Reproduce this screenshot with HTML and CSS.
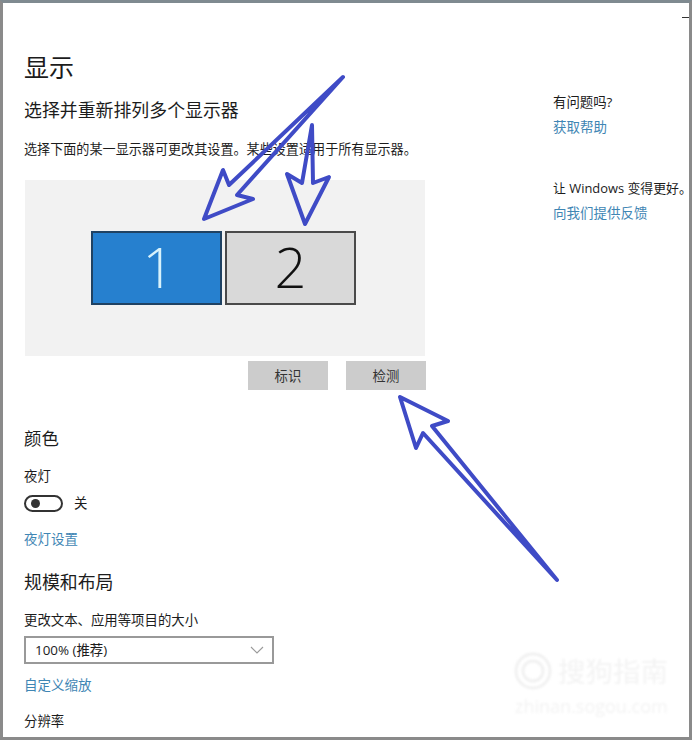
FILE: index.html
```html
<!DOCTYPE html>
<html lang="zh-CN">
<head>
    <meta charset="UTF-8">
    <meta name="viewport" content="width=device-width, initial-scale=1.0">
    <title>显示</title>
    <link rel="stylesheet" href="styles.css">
</head>
<body>
    <div class="frame">
        <span class="minimize"></span>
        <div class="main">
            <h1>显示</h1>
            <h2 class="arrange-title">选择并重新排列多个显示器</h2>
            <p class="arrange-hint">选择下面的某一显示器可更改其设置。某些设置适用于所有显示器。</p>
            <div class="monitors">
                <div class="monitor active">1</div>
                <div class="monitor">2</div>
            </div>
            <div class="monitor-buttons">
                <button class="btn">标识</button>
                <button class="btn">检测</button>
            </div>

            <h2 class="color-title">颜色</h2>
            <p class="night-label">夜灯</p>
            <div class="toggle-row">
                <span class="toggle"><span class="knob"></span></span>
                <span class="toggle-text">关</span>
            </div>
            <a class="link night-link">夜灯设置</a>

            <h2 class="scale-title">规模和布局</h2>
            <p class="scale-label">更改文本、应用等项目的大小</p>
            <div class="select">
                <span>100% (推荐)</span>
                <svg width="14" height="8" viewBox="0 0 14 8"><path d="M1 1l6 6 6-6" fill="none" stroke="#9a9a9a" stroke-width="1.1"/></svg>
            </div>
            <a class="link custom-link">自定义缩放</a>
            <p class="res-label">分辨率</p>
            <div class="select"></div>
        </div>
        <div class="side">
            <p class="side-q">有问题吗?</p>
            <a class="link">获取帮助</a>
            <p class="side-q side-second">让 Windows 变得更好。</p>
            <a class="link">向我们提供反馈</a>
        </div>
    </div>

    <!-- annotation arrows drawn on top of the screenshot -->
    <svg class="arrows" width="692" height="740" viewBox="0 0 692 740">
        <path d="M343 77L229 185 223 170 204 219 253 199 237 195Z"/>
        <path d="M312 125L302 183 287 174 305 224 329 177 313 183Z"/>
        <path d="M557 580L423 433 416 448 400 397 448 421 432 426Z"/>
    </svg>

    <div class="watermark">
        <svg width="38" height="38" viewBox="0 0 38 38">
            <circle cx="19" cy="19" r="17" fill="none" stroke="#f1f1f1" stroke-width="3"/>
            <circle cx="19" cy="19" r="10" fill="none" stroke="#f1f1f1" stroke-width="3"/>
        </svg>
        <div class="wm-name">搜狗指南</div>
        <div class="wm-url">zhinan.sogou.com</div>
    </div>
</body>
</html>
```

FILE: styles.css
```css
* {
    box-sizing: border-box;
}
html, body {
    margin: 0;
    padding: 0;
    height: 740px;
    overflow: hidden;
    background: #fff;
}
body {
    position: relative;
    font-family: "Open Sans", "Noto Sans CJK SC", sans-serif;
    font-size: 13.4px;
    line-height: 18px;
    color: #1c1c1c;
}
h1, h2, p {
    margin: 0;
    font-weight: 400;
}
.frame {
    position: relative;
    display: flex;
    height: 740px;
    border-top: 3px solid #7f8a90;
    border-left: 3px solid #8a8a8a;
    border-right: 3px solid #8a8a8a;
    border-bottom: 3px solid #8a8a8a;
    overflow: hidden;
}
.minimize {
    position: absolute;
    top: 14px;
    right: 0;
    width: 7px;
    height: 1px;
    background: #333;
}
.main {
    flex: 0 0 550px;
    padding-left: 21px;
}
h1 {
    margin-top: 47px;
    font-size: 25px;
    line-height: 34px;
}
.arrange-title {
    margin-top: 13px;
    font-size: 17.9px;
    line-height: 26px;
}
.arrange-hint {
    margin-top: 17px;
    font-size: 13.1px;
}
.monitors {
    display: flex;
    justify-content: center;
    gap: 3px;
    width: 400px;
    height: 176px;
    margin: 22px 0 0 1px;
    padding: 51px 3px 0 0;
    background: #f2f2f2;
}
.monitor {
    width: 131px;
    height: 74px;
    border: 2px solid #4a4a4a;
    background: #d9d9d9;
    color: #111;
    font-family: "Open Sans", sans-serif;
    font-weight: 300;
    font-size: 56px;
    line-height: 66px;
    text-align: center;
}
.monitor.active {
    padding-left: 4px;
    border-color: #1f4263;
    background: #2680cf;
    color: #d8f2fb;
}
.monitor-buttons {
    display: flex;
    justify-content: flex-end;
    gap: 18px;
    width: 403px;
    margin-top: 5px;
    padding-right: 1px;
}
.btn {
    width: 80px;
    height: 29px;
    padding: 0;
    border: 0;
    background: #cccccc;
    color: #333;
    font: inherit;
}
.color-title {
    margin-top: 35px;
    font-size: 17.4px;
    line-height: 26px;
}
.night-label {
    margin-top: 16px;
}
.toggle-row {
    display: flex;
    align-items: center;
    gap: 11px;
    margin-top: 8px;
    height: 20px;
}
.toggle {
    display: flex;
    align-items: center;
    width: 39px;
    height: 17px;
    padding-left: 5px;
    border: 2px solid #333;
    border-radius: 9px;
}
.knob {
    width: 9px;
    height: 9px;
    border-radius: 50%;
    background: #333;
}
.link {
    display: block;
    font-size: 13.5px;
    color: #3f86b4;
}
.night-link {
    margin-top: 17px;
}
.scale-title {
    margin-top: 21px;
    font-size: 17.9px;
    line-height: 26px;
}
.scale-label {
    margin-top: 16px;
}
.select {
    display: flex;
    align-items: center;
    justify-content: space-between;
    width: 250px;
    height: 28px;
    margin-top: 7px;
    padding: 0 8px 0 9px;
    border: 2px solid #999;
}
.custom-link {
    margin-top: 12px;
}
.res-label {
    margin-top: 18px;
}
.side {
    min-width: 0;
    padding-top: 90px;
}
.side p, .side .link {
    white-space: nowrap;
}
.side .link {
    margin-top: 7px;
}
.side-second {
    margin-top: 43px;
    font-size: 12.9px;
}
.arrows {
    position: absolute;
    top: 0;
    left: 0;
    pointer-events: none;
}
.arrows path {
    fill: none;
    stroke: #3f4bc6;
    stroke-width: 4;
    stroke-linejoin: round;
    stroke-linecap: round;
}
.watermark {
    position: absolute;
    top: 652px;
    left: 514px;
    width: 160px;
    height: 70px;
    color: #f3f3f3;
    filter: blur(0.8px);
}
.watermark svg {
    position: absolute;
    top: 0;
    left: 0;
}
.wm-name {
    position: absolute;
    top: 2px;
    left: 44px;
    font-size: 27.5px;
    line-height: 36px;
    white-space: nowrap;
}
.wm-url {
    position: absolute;
    top: 43px;
    left: 1px;
    font-size: 18px;
    line-height: 22px;
    white-space: nowrap;
}
```
